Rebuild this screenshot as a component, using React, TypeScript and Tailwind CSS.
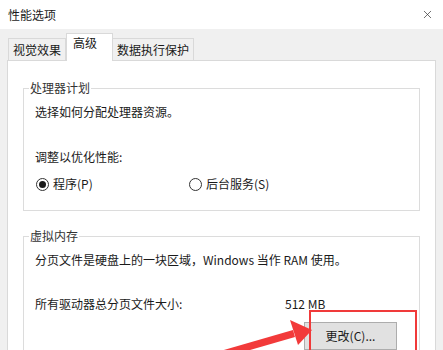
import { X } from 'lucide-react';

const font = { fontFamily: '"Noto Sans CJK SC", "Noto Sans", sans-serif' };

function Radio({ checked, label, className = '' }: { checked?: boolean; label: string; className?: string }) {
  return (
    <div className={`flex items-center gap-[4px] ${className}`}>
      <span className="w-[13px] h-[13px] rounded-full border border-[#333] bg-white flex items-center justify-center">
        {checked && <span className="w-[7px] h-[7px] rounded-full bg-[#1a1a1a]" />}
      </span>
      <span>{label}</span>
    </div>
  );
}

export default function App() {
  return (
    <div style={font} className="relative w-[443px] h-[350px] overflow-hidden bg-[#f0f0f0] text-[12px] leading-[16px] text-[#1a1a1a]">
      {/* title bar */}
      <div className="h-[29px] bg-white flex items-center justify-between pl-[8px] pr-[9px]">
        <span>性能选项</span>
        <X className="w-[13px] h-[13px] text-[#333]" strokeWidth={1.3} />
      </div>

      {/* tabs */}
      <div className="flex items-end px-[8px] pt-[3px] h-[31px]">
        <div className="h-[22px] px-[4px] flex items-center border border-b-0 border-[#d9d9d9] bg-[#f0f0f0]">视觉效果</div>
        <div className="relative z-10 h-[28px] w-[47px] px-[6px] pt-[1px] flex items-start border border-b-0 border-[#d9d9d9] bg-white -mb-[1px]">高级</div>
        <div className="h-[22px] px-[4px] flex items-center border border-b-0 border-l-0 border-[#d9d9d9] bg-[#f0f0f0]">数据执行保护</div>
      </div>

      {/* panel */}
      <div className="ml-[7px] w-[429px] h-[300px] border border-[#d9d9d9] bg-white px-[15px] pt-[19px]">
        <fieldset className="border border-[#dcdcdc] h-[131px] px-[11px]">
          <legend className="-ml-[6px] px-[1px] text-[#333]">处理器计划</legend>
          <div className="mt-[8px]">选择如何分配处理器资源。</div>
          <div className="mt-[29px]">调整以优化性能:</div>
          <div className="flex mt-[11px]">
            <Radio checked label="程序(P)" className="w-[153px] ml-[1px]" />
            <Radio label="后台服务(S)" />
          </div>
        </fieldset>

        <fieldset className="border border-[#dcdcdc] h-[140px] mt-[17px] px-[11px]">
          <legend className="-ml-[6px] px-[1px] text-[#333]">虚拟内存</legend>
          <div className="mt-[8px]">分页文件是硬盘上的一块区域，Windows 当作 RAM 使用。</div>
          <div className="flex mt-[28px]">
            <span className="w-[250px]">所有驱动器总分页文件大小:</span>
            <span>512 MB</span>
          </div>
          <div className="flex justify-end pr-[11px] mt-[10px]">
            <button className="w-[93px] h-[28px] bg-[#e1e1e1] border border-[#adadad] text-[12px]">更改(C)...</button>
          </div>
        </fieldset>
      </div>

      {/* red highlight box */}
      <div className="absolute left-[309px] top-[310px] w-[108px] h-[50px] border-2 border-[#f03a3a]" />

      {/* red arrow */}
      <svg className="absolute left-0 top-0" width="443" height="350" viewBox="0 0 443 350">
        <path d="M210 354 L293 330 L295 337 L212 361 Z" fill="#f23a3a" />
        <path d="M312 330 L290 320 L298 345 Z" fill="#f23a3a" />
      </svg>
    </div>
  );
}
